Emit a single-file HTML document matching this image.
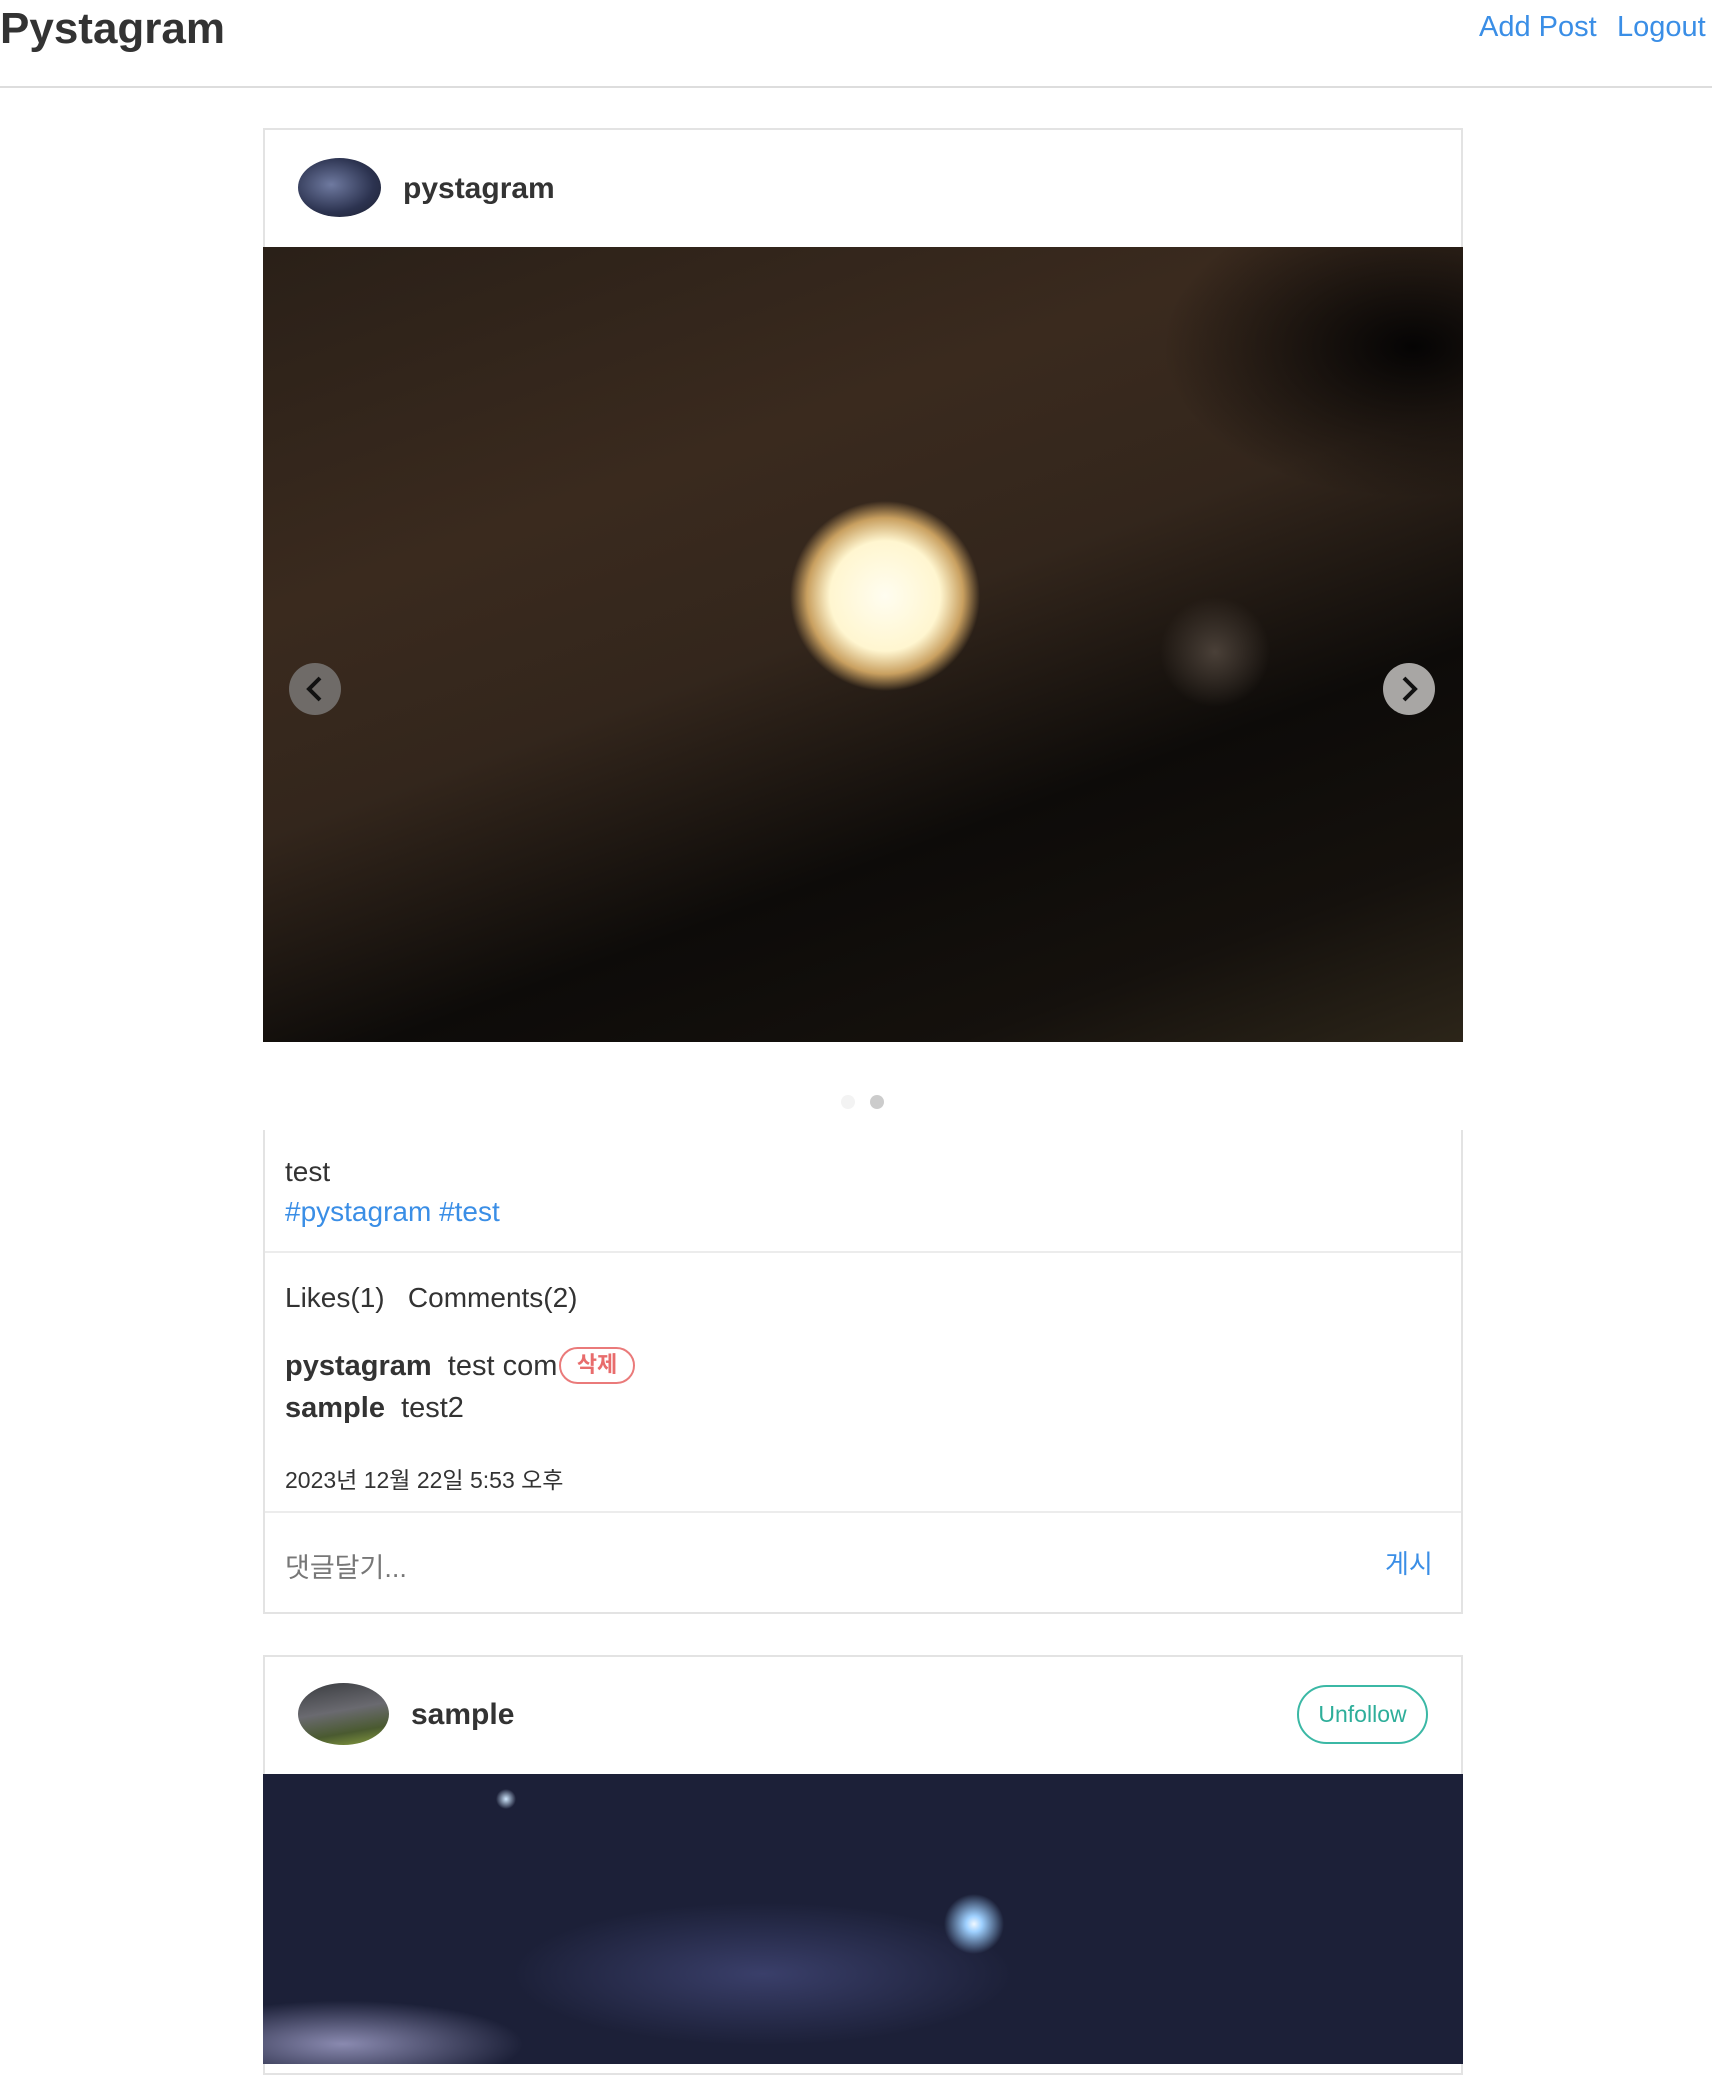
<!DOCTYPE html>
<html><head><meta charset="utf-8"><style>
*{box-sizing:border-box;margin:0;padding:0}
body{width:1712px;height:2052px;overflow:hidden;background:#fff;font-family:"Liberation Sans","Noto Sans CJK KR",sans-serif;color:#333;position:relative}
.a{position:absolute;white-space:nowrap}
.blue{color:#3a8ee6}
</style></head><body>
<div class="a" style="left:0;top:4px;font-size:44px;font-weight:bold;color:#333">Pystagram</div>
<div class="a blue" style="left:1479px;top:11px;font-size:29px">Add Post</div>
<div class="a blue" style="left:1617px;top:11px;font-size:29px">Logout</div>
<div class="a" style="left:0;top:86px;width:1712px;height:2px;background:#ddd"></div>

<!-- card 1 -->
<div class="a" style="left:263px;top:128px;width:1200px;height:120px;border:2px solid #e3e3e3;border-bottom:none"></div>
<div class="a" style="left:298px;top:158px;width:83px;height:59px;border-radius:50%;background:radial-gradient(ellipse at 40% 45%,#6f7aa0,#2c3350 60%,#1a1d2c)"></div>
<div class="a" style="left:403px;top:172px;font-size:30px;font-weight:bold">pystagram</div>
<div class="a" style="left:263px;top:247px;width:1200px;height:795px;background:radial-gradient(circle at 622px 349px,#fffdf0 0,#fff6d0 55px,#c9a060 78px,rgba(80,60,40,0) 95px),radial-gradient(circle at 952px 405px,#4a4038 0,rgba(60,50,44,0) 55px),radial-gradient(ellipse at 1150px 100px,#050404 0,rgba(5,4,4,0) 250px),linear-gradient(160deg,#2a2018 0%,#3a2a1e 30%,#33261c 48%,#0d0b09 68%,#15110d 85%,#2c2519 100%)"></div>
<div class="a" style="left:289px;top:663px;width:52px;height:52px;border-radius:50%;background:#6f6b68"></div>
<svg class="a" style="left:289px;top:663px" width="52" height="52"><path d="M31 15 L20 26 L31 37" stroke="#111" stroke-width="4" fill="none"/></svg>
<div class="a" style="left:1383px;top:663px;width:52px;height:52px;border-radius:50%;background:#a8a6a4"></div>
<svg class="a" style="left:1383px;top:663px" width="52" height="52"><path d="M21 15 L32 26 L21 37" stroke="#111" stroke-width="4" fill="none"/></svg>
<div class="a" style="left:841px;top:1095px;width:14px;height:14px;border-radius:50%;background:#f3f3f3"></div>
<div class="a" style="left:870px;top:1095px;width:14px;height:14px;border-radius:50%;background:#ccc"></div>
<div class="a" style="left:263px;top:1130px;width:1200px;height:484px;border:2px solid #e3e3e3;border-top:none"></div>
<div class="a" style="left:285px;top:1156px;font-size:28px">test</div>
<div class="a blue" style="left:285px;top:1196px;font-size:28px">#pystagram #test</div>
<div class="a" style="left:265px;top:1251px;width:1196px;height:2px;background:#ececec"></div>
<div class="a" style="left:285px;top:1282px;font-size:28px">Likes(1)&nbsp;&nbsp;&nbsp;Comments(2)</div>
<div class="a" style="left:285px;top:1350px;font-size:29px"><b>pystagram</b>&nbsp; test com</div>
<div class="a" style="left:559px;top:1347px;width:76px;height:37px;border:2px solid #ea7a7a;border-radius:19px;color:#e86c6c;font-size:22px;font-weight:bold;text-align:center;line-height:32px">삭제</div>
<div class="a" style="left:285px;top:1392px;font-size:29px"><b>sample</b>&nbsp; test2</div>
<div class="a" style="left:285px;top:1461px;font-size:23px">2023년 12월 22일 5:53 오후</div>
<div class="a" style="left:265px;top:1511px;width:1196px;height:2px;background:#ececec"></div>
<div class="a" style="left:285px;top:1546px;font-size:27px;color:#777">댓글달기...</div>
<div class="a blue" style="left:1385px;top:1544px;font-size:26px">게시</div>

<!-- card 2 -->
<div class="a" style="left:263px;top:1655px;width:1200px;height:420px;border:2px solid #e3e3e3"></div>
<div class="a" style="left:298px;top:1683px;width:91px;height:62px;border-radius:50%;background:linear-gradient(170deg,#3a3c40 0%,#6a6a70 45%,#4a5a30 75%,#8aa040 100%)"></div>
<div class="a" style="left:411px;top:1698px;font-size:30px;font-weight:bold">sample</div>
<div class="a" style="left:1297px;top:1685px;width:131px;height:59px;border:2px solid #3bb8a5;border-radius:30px;color:#2eae9a;font-size:23px;text-align:center;line-height:54px">Unfollow</div>
<div class="a" style="left:263px;top:1774px;width:1200px;height:290px;background:radial-gradient(circle at 711px 150px,#f0f8ff 0,#9ed0ff 8px,rgba(60,90,160,0) 30px),radial-gradient(circle at 243px 25px,#d0e8ff 0,rgba(60,90,160,0) 10px),radial-gradient(ellipse at 80px 270px,#8a8ab0,rgba(40,40,80,0) 180px),radial-gradient(ellipse at 500px 200px,#3a3f6a,rgba(20,22,50,0) 250px),#1c2038"></div>
</body></html>
